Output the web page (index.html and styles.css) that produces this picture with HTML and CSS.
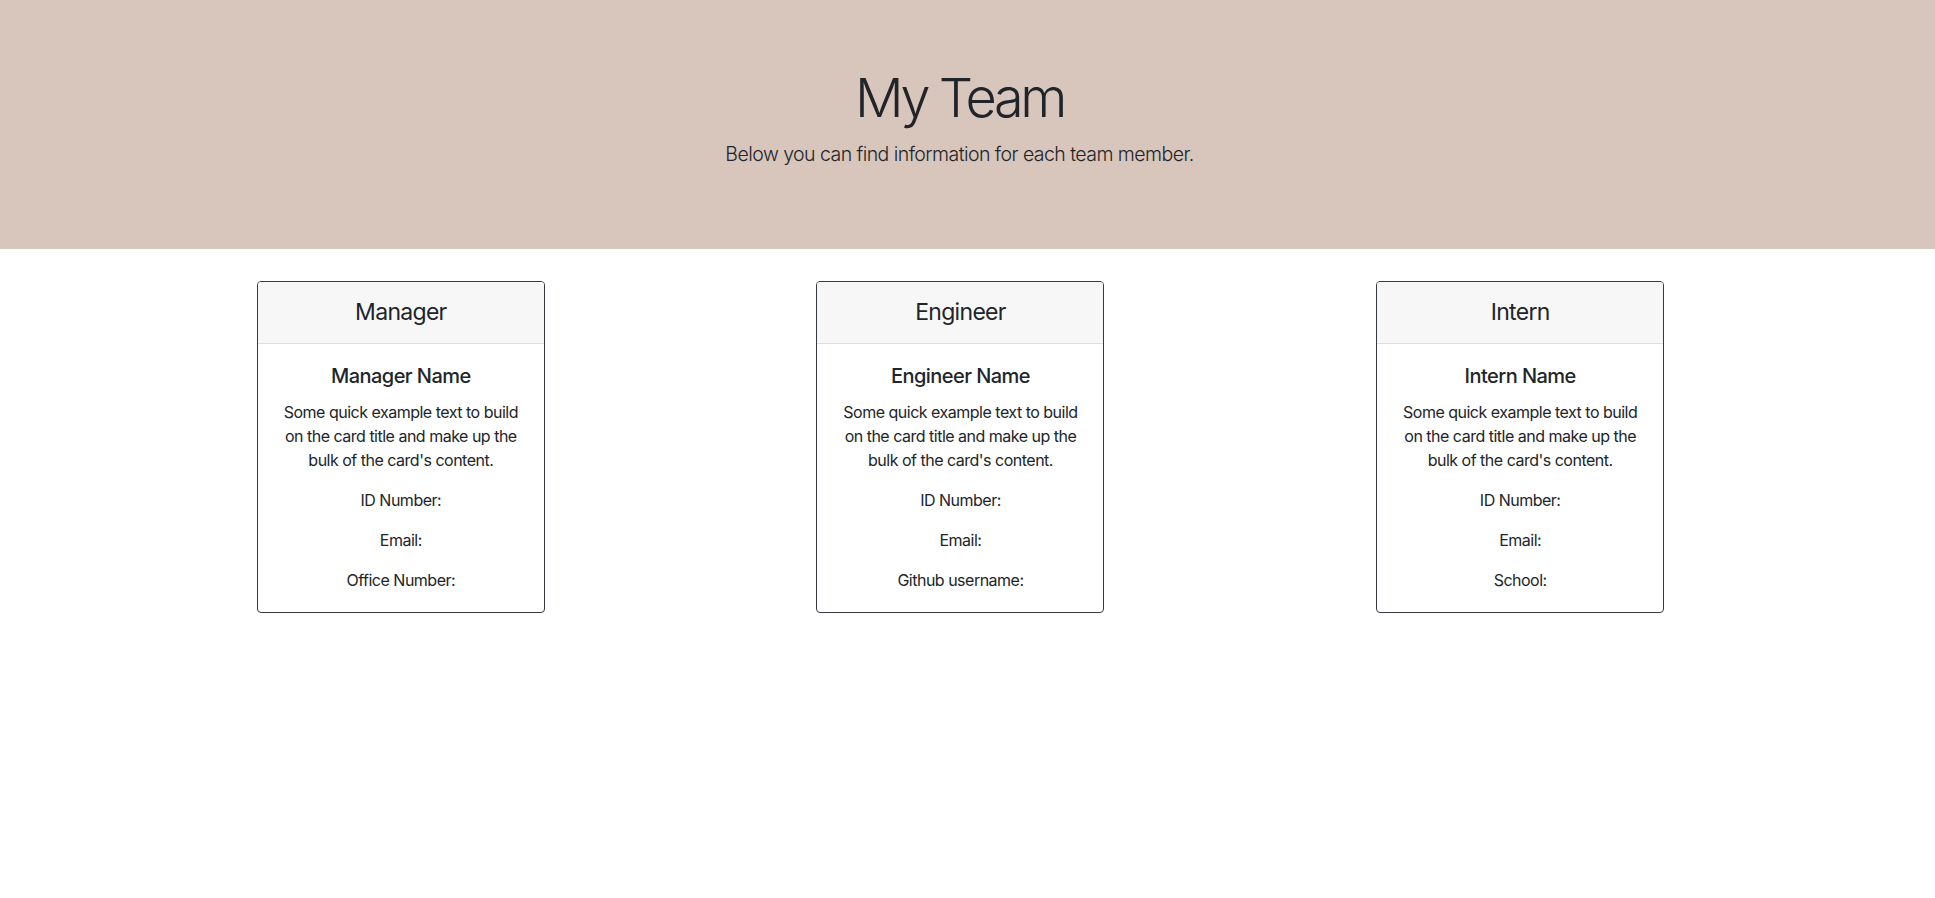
FILE: index.html
```html
<!DOCTYPE html>
<html lang="en">
<head>
<meta charset="utf-8">
<title>My Team</title>
<link rel="stylesheet" href="styles.css">
</head>
<body>
<header class="hero">
  <h1 class="hero-title">My Team</h1>
  <p class="hero-lead">Below you can find information for each team member.</p>
</header>
<main class="cards">
  <section class="card">
    <div class="card-header"><h4>Manager</h4></div>
    <div class="card-body">
      <h5 class="card-title">Manager Name</h5>
      <p class="card-text">Some quick example text to build on the card title and make up the bulk of the card's content.</p>
      <p class="card-text">ID Number:</p>
      <p class="card-text">Email:</p>
      <p class="card-text">Office Number:</p>
    </div>
  </section>
  <section class="card">
    <div class="card-header"><h4>Engineer</h4></div>
    <div class="card-body">
      <h5 class="card-title">Engineer Name</h5>
      <p class="card-text">Some quick example text to build on the card title and make up the bulk of the card's content.</p>
      <p class="card-text">ID Number:</p>
      <p class="card-text">Email:</p>
      <p class="card-text">Github username:</p>
    </div>
  </section>
  <section class="card">
    <div class="card-header"><h4>Intern</h4></div>
    <div class="card-body">
      <h5 class="card-title">Intern Name</h5>
      <p class="card-text">Some quick example text to build on the card title and make up the bulk of the card's content.</p>
      <p class="card-text">ID Number:</p>
      <p class="card-text">Email:</p>
      <p class="card-text">School:</p>
    </div>
  </section>
</main>
</body>
</html>
```

FILE: styles.css
```css
* { box-sizing: border-box; }

body {
  margin: 0;
  font-family: Inter, "Noto Sans", "Liberation Sans", sans-serif;
  font-size: 16px;
  line-height: 24px;
  letter-spacing: -0.5px;
  color: #212529;
  background: #fff;
}

.hero {
  background: #d8c6bc;
  padding: 64px 16px 64px 0;
  margin-bottom: 32px;
  text-align: center;
}

.hero-title {
  margin: 0 0 8px;
  font-size: 54px;
  font-weight: 300;
  line-height: 67px;
  letter-spacing: -3.4px;
}

.hero-lead {
  margin: 0 0 16px;
  font-size: 19.5px;
  font-weight: 300;
  line-height: 30px;
  letter-spacing: -0.55px;
}

.cards {
  display: grid;
  grid-template-columns: repeat(3, 1fr);
  justify-items: center;
  align-items: start;
  padding: 0 135px 0 121px;
}

.card {
  width: 288px;
  border: 1px solid #343a40;
  border-radius: 4px;
  text-align: center;
  overflow: hidden;
}

.card-header {
  padding: 16px 20px;
  background: #f7f7f7;
  border-bottom: 1px solid #dfdfdf;
}

.card-header h4 {
  margin: 0;
  font-size: 23px;
  font-weight: 400;
  line-height: 29px;
  letter-spacing: -0.7px;
}

.card-body {
  padding: 20px;
}

.card-title {
  margin: 0 0 12px;
  font-size: 20px;
  font-weight: 500;
  line-height: 24px;
  letter-spacing: -0.55px;
}

.card-text {
  margin: 0 0 16px;
}

.card-text:last-child {
  margin-bottom: 0;
}
```
